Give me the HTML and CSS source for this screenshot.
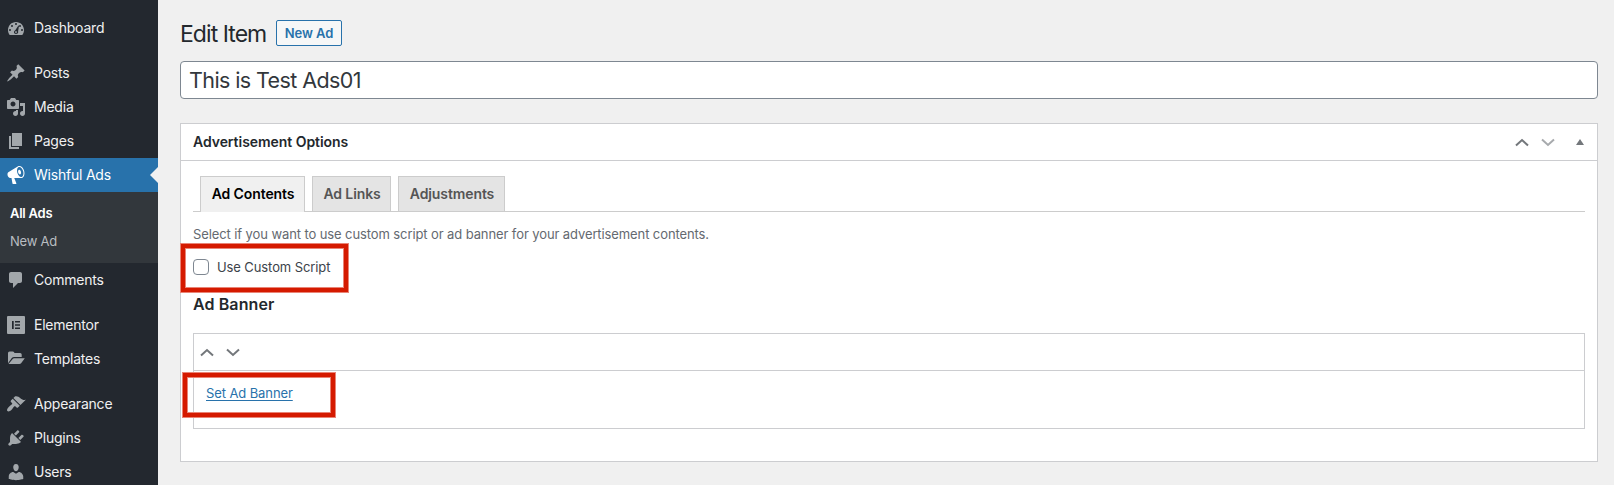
FILE: index.html
```html
<!DOCTYPE html>
<html lang="en">
<head>
<meta charset="utf-8">
<title>Edit Item</title>
<link rel="stylesheet" href="styles.css">
</head>
<body>
<div class="layout">
  <nav class="sidebar">
    <a class="item"><svg class="icon" viewBox="0 0 20 20"><path fill-rule="evenodd" d="M3.76 17h12.48C17.34 15.63 18 13.9 18 12c0-4.41-3.58-8-8-8s-8 3.59-8 8c0 1.9.66 3.63 1.76 5zM9 6a1 1 0 1 1 2 0a1 1 0 1 1-2 0zM5 8a1 1 0 1 1 2 0a1 1 0 1 1-2 0zM13 8a1 1 0 1 1 2 0a1 1 0 1 1-2 0zM3 12a1 1 0 1 1 2 0a1 1 0 1 1-2 0zM15 12a1 1 0 1 1 2 0a1 1 0 1 1-2 0zM12.4 7.4l.6.3-.9 5.6c.5 1.6-.5 2.8-2.1 2.8-1.500 0-2.400-1.300-1.900-2.600.2-.6.7-.9 1.200-1.200zM10 13.200a.9.9 0 1 0 .01 0z"/></svg><span>Dashboard</span></a>
    <div class="separator"></div>
    <a class="item"><svg class="icon" viewBox="0 0 20 20"><path d="M10.44 3.02l1.82-1.82 6.36 6.35-1.83 1.82c-1.05-.68-2.48-.57-3.41.36l-.75.75c-.92.93-1.04 2.35-.35 3.41l-1.83 1.82-2.41-2.41-2.8 2.79c-.42.42-3.38 2.71-3.8 2.29s1.86-3.39 2.28-3.81l2.79-2.79L4.1 9.36l1.83-1.82c1.05.69 2.48.57 3.4-.36l.75-.75c.93-.92 1.05-2.35.36-3.41z"/></svg><span>Posts</span></a>
    <a class="item"><svg class="icon" viewBox="0 0 20 20"><path d="M13 11V4c0-.55-.45-1-1-1h-1.670L9 1H5L3.670 3H2c-.55 0-1 .45-1 1v7c0 .55.45 1 1 1h10c.55 0 1-.45 1-1zM7 4.500c1.380 0 2.500 1.120 2.500 2.500S8.380 9.500 7 9.500 4.500 8.380 4.500 7 5.620 4.500 7 4.500zM14 6h5v10.500c0 1.380-1.120 2.500-2.500 2.500S14 17.880 14 16.500s1.120-2.500 2.500-2.500c.17 0 .34.02.5.05V9h-3V6zm-4 8.050V13h2v3.500c0 1.380-1.120 2.500-2.500 2.500S7 17.880 7 16.500 8.120 14 9.500 14c.17 0 .34.02.5.05z"/></svg><span>Media</span></a>
    <a class="item"><svg class="icon" viewBox="0 0 20 20"><path d="M6 15V2h10v13H6zm-1 1h8v2H3V5h2v11z"/></svg><span>Pages</span></a>
    <a class="item current"><svg class="icon" viewBox="0 0 20 20"><path d="M18.15 5.94c.46 1.62.38 3.22-.02 4.48-.42 1.28-1.26 2.18-2.3 2.48-.16.06-.26.06-.4.06-.06.02-.12.02-.18.02-.06.02-.14.02-.22.02h-6.8l2.22 5.5c.02.14-.06.26-.14.34-.08.1-.24.16-.34.16H6.950c-.1 0-.26-.06-.34-.16-.08-.08-.16-.2-.14-.34l-1-5.500H4.250l-.02-.02c-.5.06-1.080-.18-1.540-.62s-.88-1.080-1.060-1.880c-.24-.8-.2-1.560-.02-2.200.18-.62.58-1.080 1.060-1.300l.02-.02 9-5.400c.1-.06.18-.1.24-.16.06-.04.14-.08.24-.12.16-.08.28-.12.5-.18 1.040-.3 2.240.1 3.220.98s1.840 2.240 2.260 3.860zm-2.580 5.980h-.02c.4-.1.74-.34 1.040-.7.58-.7.86-1.760.86-3.040 0-.64-.1-1.300-.28-1.980-.34-1.360-1.020-2.500-1.780-3.240s-1.680-1.100-2.460-.88c-.82.22-1.400.96-1.700 2-.32 1.040-.28 2.360.06 3.720.38 1.360 1 2.500 1.800 3.240.78.74 1.620 1.100 2.480.88zm-2.540-7.080c.22-.04.42-.02.62.04.38.16.76.48 1.020 1s.42 1.200.42 1.780c0 .3-.04.56-.12.8-.18.48-.44.84-.86.94-.34.1-.8-.06-1.140-.4s-.64-.86-.78-1.500c-.18-.62-.12-1.240.02-1.720s.48-.84.82-.94z"/></svg><span>Wishful Ads</span></a>
    <div class="submenu"><a class="active">All Ads</a><a>New Ad</a></div>
    <a class="item"><svg class="icon" viewBox="0 0 20 20"><path d="M5 2h9c1.100 0 2 .9 2 2v7c0 1.100-.9 2-2 2h-2l-5 5v-5H5c-1.100 0-2-.9-2-2V4c0-1.100.9-2 2-2z"/></svg><span>Comments</span></a>
    <div class="separator"></div>
    <a class="item"><svg class="icon" viewBox="0 0 20 20"><path fill-rule="evenodd" d="M2 1h16q1 0 1 1v16q0 1-1 1H2q-1 0-1-1V2q0-1 1-1zM6 6v8h1.700V6zM9 6v1.600h5V6zM9 9.200v1.600h5V9.200zM9 12.400V14h5v-1.600z"/></svg><span>Elementor</span></a>
    <a class="item"><svg class="icon" viewBox="0 0 20 20"><path d="M2 14.200V4q0-1.600 1.600-1.600h3.100q1 0 1.400.9l.4.700h5.600q1.600 0 1.600 1.600v2.300H8.100q-1.400 0-2.300 1.100zM2.500 15l4.200-5.100q.5-.7 1.400-.7H18.800l-3.700 5q-.6.800-1.700.800z"/></svg><span>Templates</span></a>
    <div class="separator"></div>
    <a class="item"><svg class="icon" viewBox="0 0 20 20"><path d="M14.480 11.060L7.410 3.990l1.500-1.500c.5-.56 2.300-.47 3.510.32 1.210.8 1.430 1.280 2.910 2.100 1.180.64 2.450 1.260 4.450.85zm-.71.71L6.700 4.700 4.930 6.470c-.39.39-.39 1.020 0 1.410l1.060 1.060c.39.39.39 1.030 0 1.420-.6.6-1.430 1.110-2.210 1.690-.35.26-.7.53-1.010.84C1.430 14.230.4 16.080 1.400 17.070c.99 1 2.840-.03 4.180-1.360.31-.31.58-.66.85-1.020.57-.78 1.080-1.610 1.690-2.210.39-.39 1.020-.39 1.410 0l1.060 1.060c.39.39 1.020.39 1.410 0z"/></svg><span>Appearance</span></a>
    <a class="item"><svg class="icon" viewBox="0 0 20 20"><path d="M13.110 4.360L9.870 7.600 8 5.730l3.240-3.240c.35-.34 1.050-.2 1.560.32.52.51.66 1.210.31 1.550zm-8 1.770l.91-1.120 9.010 9.010-1.190.84c-.71.71-2.630 1.160-3.820 1.160H6.140L4.900 17.260c-.59.59-1.540.59-2.120 0-.59-.58-.59-1.530 0-2.120l1.240-1.240v-3.880c0-1.130.4-3.190 1.090-3.890zm7.260 3.970l3.240-3.240c.34-.35 1.040-.21 1.550.31.52.51.66 1.210.31 1.550l-3.240 3.250z"/></svg><span>Plugins</span></a>
    <a class="item"><svg class="icon" viewBox="0 0 20 20"><path d="M10 9.250c-2.270 0-2.730-3.440-2.730-3.440C7 4.020 7.820 2 9.970 2c2.160 0 2.980 2.020 2.710 3.810 0 0-.41 3.440-2.680 3.440zm0 2.570L12.720 10c2.390 0 4.520 2.330 4.520 4.530v2.490s-3.650 1.130-7.240 1.130c-3.650 0-7.240-1.130-7.240-1.130v-2.490c0-2.250 1.940-4.480 4.470-4.480z"/></svg><span>Users</span></a>
  </nav>
  <main class="content">
    <header class="heading"><h1>Edit Item</h1><a class="new-button">New Ad</a></header>
    <div class="title-field">This is Test Ads01</div>
    <section class="panel">
      <div class="panel-header">
        <h2>Advertisement Options</h2>
        <svg class="chevron" viewBox="0 0 14 9"><path d="M1 7.500l6-5.500 6 5.500"/></svg>
        <svg class="chevron dim" viewBox="0 0 14 9"><path d="M1 1.500l6 5.500 6-5.500"/></svg>
        <svg class="toggle" viewBox="0 0 8 6"><path d="M0 6L4 0l4 6z"/></svg>
      </div>
      <div class="panel-body">
        <div class="tabs"><a class="tab selected">Ad Contents</a><a class="tab links">Ad Links</a><a class="tab adjust">Adjustments</a></div>
        <p class="description">Select if you want to use custom script or ad banner for your advertisement contents.</p>
        <label class="option"><span class="checkbox"></span><span>Use Custom Script</span><span class="marker marker-option"></span></label>
        <h3>Ad Banner</h3>
        <div class="banner-box">
          <div class="banner-header">
            <svg class="chevron" viewBox="0 0 14 9"><path d="M1 7.500l6-5.500 6 5.500"/></svg>
            <svg class="chevron" viewBox="0 0 14 9"><path d="M1 1.500l6 5.500 6-5.500"/></svg>
          </div>
          <div class="banner-content"><a class="banner-link">Set Ad Banner</a><span class="marker marker-banner"></span></div>
        </div>
      </div>
    </section>
  </main>
</div>
</body>
</html>
```
FILE: styles.css
```css
* { box-sizing: border-box; }
body { margin: 0; background: #f0f0f0; color: #23282d; font: 13px/20px Inter, "Liberation Sans", sans-serif; letter-spacing: -.1px; }
h1, h2, h3, p { margin: 0; }
.layout { display: flex; height: 485px; overflow: hidden; }
.sidebar { flex: none; width: 158px; padding-top: 11px; background: #23282f; }
.item { display: flex; align-items: center; gap: 8px; height: 34px; padding-left: 6px; color: #f0f0f1; font-size: 14px; letter-spacing: -.22px; }
.icon { flex: none; width: 20px; height: 20px; fill: #a2a7ab; }
.separator { height: 11px; }
.current { position: relative; background: #2872ab; color: #fff; }
.current .icon { fill: #fff; }
.current::after { content: ""; position: absolute; right: 0; top: 9px; border: solid transparent; border-width: 8px 8px 8px 0; border-right-color: #f0f0f0; }
.submenu { display: flex; flex-direction: column; height: 71px; padding: 7px 10px; background: #32373c; color: #b9bdc1; letter-spacing: -.25px; }
.submenu a { line-height: 28px; }
.submenu .active { color: #fff; font-weight: 600; }
.content { flex: 1; padding: 20px 16px 0 22px; }
.heading { display: flex; align-items: center; gap: 9px; height: 26px; }
h1 { width: 87px; padding-top: 1px; font-size: 23px; font-weight: 400; white-space: nowrap; letter-spacing: -.95px; }
.new-button { width: 66px; height: 26px; border: 1px solid #2872ab; border-radius: 2px; background: #f6f7f7; color: #2872ab; font-weight: 600; line-height: 25px; text-align: center; }
.title-field { height: 38px; margin-top: 15px; padding-left: 8px; border: 1px solid #7e8791; border-radius: 4px; background: #fff; color: #32373c; font-size: 21.5px; line-height: 37px; letter-spacing: -.6px; }
.panel { height: 339px; margin-top: 24px; border: 1px solid #cccdd0; background: #fff; }
.panel-header { display: flex; align-items: center; height: 37px; padding: 0 13px 0 12px; border-bottom: 1px solid #cccdd0; }
h2 { flex: 1; font-size: 14px; font-weight: 600; line-height: 36px; letter-spacing: -.05px; }
.chevron { width: 14px; height: 9px; fill: none; stroke: #73777b; stroke-width: 2; }
.chevron + .chevron { margin-left: 12px; }
.dim { stroke: #a7aaad; }
.toggle { width: 8px; height: 6px; margin-left: 21px; fill: #73777b; }
.panel-body { padding: 15px 12px 0; }
.tabs { display: flex; gap: 7px; height: 36px; padding-left: 7px; border-bottom: 1px solid #ccc; }
.tab { width: 105px; height: 35px; padding-left: 1px; border: 1px solid #ccc; border-bottom: 0; background: #e4e4e4; color: #555; font-size: 14px; font-weight: 600; line-height: 34px; text-align: center; }
.selected { height: 36px; background: #f0f0f0; color: #000; }
.links { width: 79px; }
.adjust { width: 107px; }
.description { margin-top: 12px; color: #646970; }
.option { position: relative; display: flex; align-items: center; gap: 8px; height: 20px; margin-top: 13px; color: #3c434a; }
.checkbox { width: 16px; height: 16px; border: 1px solid #7e8791; border-radius: 4px; background: #fff; }
.marker { position: absolute; border: 4px solid #d51a00; box-shadow: 0 0 0 1px #e98476, inset 0 0 0 1px #e98476; }
.marker-option { left: -12px; top: -13px; width: 167px; height: 48px; }
h3 { margin-top: 15px; font-size: 16px; font-weight: 600; line-height: 24px; letter-spacing: .1px; }
.banner-box { height: 96px; margin-top: 17px; border: 1px solid #cccdd0; }
.banner-header { display: flex; align-items: center; height: 37px; padding-left: 6px; border-bottom: 1px solid #cccdd0; }
.banner-content { position: relative; padding: 12px; }
.banner-link { color: #2872ab; text-decoration: underline; text-underline-offset: 2px; }
.marker-banner { left: -11px; top: 2px; width: 152px; height: 44px; }
```
